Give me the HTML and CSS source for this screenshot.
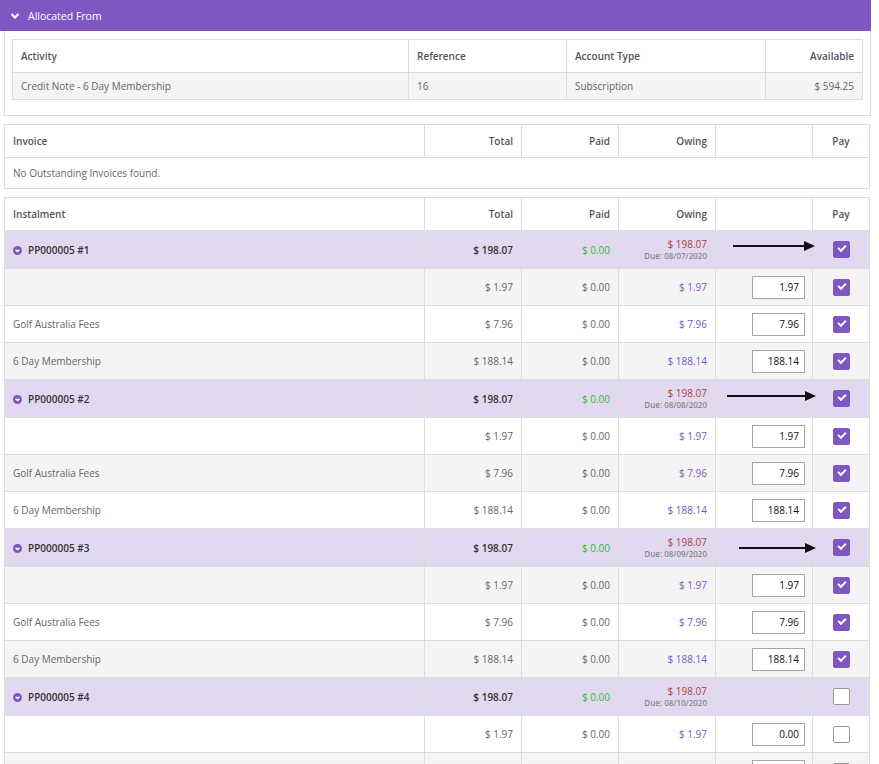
FILE: index.html
```html
<!DOCTYPE html>
<html>
<head>
<meta charset="utf-8">
<link rel="stylesheet" href="styles.css">
</head>
<body>
<div class="wrap">
  <div class="bar">
    <svg class="bar-chev" width="10" height="8" viewBox="0 0 10 8"><path d="M1.5 2 L5 5.5 L8.5 2" fill="none" stroke="#fff" stroke-width="2.2"/></svg>
    <span>Allocated From</span>
  </div>
  <div class="panel">
    <table class="tbl alloc">
      <colgroup><col style="width:396px"><col style="width:158px"><col style="width:199px"><col></colgroup>
      <tr class="head"><td>Activity</td><td>Reference</td><td>Account Type</td><td class="r">Available</td></tr>
      <tr class="gray"><td>Credit Note - 6 Day Membership</td><td>16</td><td>Subscription</td><td class="r">$ 594.25</td></tr>
    </table>
  </div>

  <table class="tbl main inv">
    <colgroup><col style="width:420px"><col style="width:97px"><col style="width:97px"><col style="width:97px"><col style="width:97px"><col></colgroup>
    <tr class="head"><td>Invoice</td><td class="r">Total</td><td class="r">Paid</td><td class="r">Owing</td><td></td><td class="c">Pay</td></tr>
    <tr class="plain"><td colspan="6">No Outstanding Invoices found.</td></tr>
  </table>

  <table class="tbl main inst">
    <colgroup><col style="width:420px"><col style="width:97px"><col style="width:97px"><col style="width:97px"><col style="width:97px"><col></colgroup>
    <tr class="head"><td>Instalment</td><td class="r">Total</td><td class="r">Paid</td><td class="r">Owing</td><td></td><td class="c">Pay</td></tr>

    <tr class="pp"><td><span class="circ"><svg width="9" height="9" viewBox="0 0 9 9"><circle cx="4.5" cy="4.5" r="4.5" fill="#7e57c2"/><path d="M2.6 3.7 L4.5 5.5 L6.4 3.7" fill="none" stroke="#fff" stroke-width="1.4"/></svg></span>PP000005 #1</td><td class="r">$ 198.07</td><td class="r green">$ 0.00</td><td class="r"><div class="red">$ 198.07</div><div class="due">Due: 08/07/2020</div></td><td class="arr-cell"><span class="arrow a1"></span></td><td class="c"><span class="cb on"></span></td></tr>
    <tr class="gray"><td></td><td class="r">$ 1.97</td><td class="r">$ 0.00</td><td class="r purple">$ 1.97</td><td class="r"><span class="inp">1.97</span></td><td class="c"><span class="cb on"></span></td></tr>
    <tr class="white"><td>Golf Australia Fees</td><td class="r">$ 7.96</td><td class="r">$ 0.00</td><td class="r purple">$ 7.96</td><td class="r"><span class="inp">7.96</span></td><td class="c"><span class="cb on"></span></td></tr>
    <tr class="gray"><td>6 Day Membership</td><td class="r">$ 188.14</td><td class="r">$ 0.00</td><td class="r purple">$ 188.14</td><td class="r"><span class="inp">188.14</span></td><td class="c"><span class="cb on"></span></td></tr>

    <tr class="pp"><td><span class="circ"><svg width="9" height="9" viewBox="0 0 9 9"><circle cx="4.5" cy="4.5" r="4.5" fill="#7e57c2"/><path d="M2.6 3.7 L4.5 5.5 L6.4 3.7" fill="none" stroke="#fff" stroke-width="1.4"/></svg></span>PP000005 #2</td><td class="r">$ 198.07</td><td class="r green">$ 0.00</td><td class="r"><div class="red">$ 198.07</div><div class="due">Due: 08/08/2020</div></td><td class="arr-cell"><span class="arrow a2"></span></td><td class="c"><span class="cb on"></span></td></tr>
    <tr class="white"><td></td><td class="r">$ 1.97</td><td class="r">$ 0.00</td><td class="r purple">$ 1.97</td><td class="r"><span class="inp">1.97</span></td><td class="c"><span class="cb on"></span></td></tr>
    <tr class="gray"><td>Golf Australia Fees</td><td class="r">$ 7.96</td><td class="r">$ 0.00</td><td class="r purple">$ 7.96</td><td class="r"><span class="inp">7.96</span></td><td class="c"><span class="cb on"></span></td></tr>
    <tr class="white"><td>6 Day Membership</td><td class="r">$ 188.14</td><td class="r">$ 0.00</td><td class="r purple">$ 188.14</td><td class="r"><span class="inp">188.14</span></td><td class="c"><span class="cb on"></span></td></tr>

    <tr class="pp"><td><span class="circ"><svg width="9" height="9" viewBox="0 0 9 9"><circle cx="4.5" cy="4.5" r="4.5" fill="#7e57c2"/><path d="M2.6 3.7 L4.5 5.5 L6.4 3.7" fill="none" stroke="#fff" stroke-width="1.4"/></svg></span>PP000005 #3</td><td class="r">$ 198.07</td><td class="r green">$ 0.00</td><td class="r"><div class="red">$ 198.07</div><div class="due">Due: 08/09/2020</div></td><td class="arr-cell"><span class="arrow a3"></span></td><td class="c"><span class="cb on"></span></td></tr>
    <tr class="gray"><td></td><td class="r">$ 1.97</td><td class="r">$ 0.00</td><td class="r purple">$ 1.97</td><td class="r"><span class="inp">1.97</span></td><td class="c"><span class="cb on"></span></td></tr>
    <tr class="white"><td>Golf Australia Fees</td><td class="r">$ 7.96</td><td class="r">$ 0.00</td><td class="r purple">$ 7.96</td><td class="r"><span class="inp">7.96</span></td><td class="c"><span class="cb on"></span></td></tr>
    <tr class="gray"><td>6 Day Membership</td><td class="r">$ 188.14</td><td class="r">$ 0.00</td><td class="r purple">$ 188.14</td><td class="r"><span class="inp">188.14</span></td><td class="c"><span class="cb on"></span></td></tr>

    <tr class="pp"><td><span class="circ"><svg width="9" height="9" viewBox="0 0 9 9"><circle cx="4.5" cy="4.5" r="4.5" fill="#7e57c2"/><path d="M2.6 3.7 L4.5 5.5 L6.4 3.7" fill="none" stroke="#fff" stroke-width="1.4"/></svg></span>PP000005 #4</td><td class="r">$ 198.07</td><td class="r green">$ 0.00</td><td class="r"><div class="red">$ 198.07</div><div class="due">Due: 08/10/2020</div></td><td></td><td class="c"><span class="cb"></span></td></tr>
    <tr class="white"><td></td><td class="r">$ 1.97</td><td class="r">$ 0.00</td><td class="r purple">$ 1.97</td><td class="r"><span class="inp">0.00</span></td><td class="c"><span class="cb"></span></td></tr>
    <tr class="gray"><td></td><td></td><td></td><td></td><td class="r"><span class="inp"></span></td><td class="c"><span class="cb"></span></td></tr>
  </table>
</div>
</body>
</html>
```
FILE: styles.css
```css
html, body { margin: 0; padding: 0; background: #fff; }
body { font-family: "Open Sans", "Liberation Sans", sans-serif; font-size: 10px; color: #666; }
.wrap { width: 871px; }
.bar { height: 31px; background: #7e57c2; color: #fff; display: flex; align-items: center; font-size: 10.5px; padding-left: 10px; box-sizing: border-box; }
.bar-chev { margin-right: 8px; }
.panel { margin-left: 4px; border: 1px solid #ddd; border-top: 0; padding: 8px 7px 15px 7px; }
.tbl { border-collapse: collapse; table-layout: fixed; width: 100%; }
.tbl td { border: 1px solid #dcdcdc; padding: 0 8px; white-space: nowrap; vertical-align: middle; }
.alloc { width: 851px; border: 1px solid #d0d0d0; }
.alloc .head td { height: 32px; }
.alloc tr.gray td { height: 26px; }
.main { margin-left: 4px; width: 866px; border: 1px solid #d0d0d0; }
.inv { margin-top: 8px; }
.inst { margin-top: 8px; }
.head td { height: 32px; color: #555; font-weight: 600; }
.plain td { height: 30px; background: #fff; }
.gray td { background: #f4f4f4; height: 36px; }
.white td { background: #fff; height: 36px; }
.pp td { background: #e2d9f0; height: 37px; color: #333; font-weight: 600; }
.r { text-align: right; }
.c { text-align: center; }
.green { color: #33bb33 !important; font-weight: 400 !important; }
.red { color: #a94442; font-weight: 400; font-size: 10px; line-height: 13px; }
.due { color: #888; font-size: 8px; line-height: 10px; }
.purple { color: #7e57c2; }
.circ { display: inline-block; width: 9px; height: 9px; margin-right: 6px; vertical-align: -1px; }
.circ svg { display: block; }
.inp { display: inline-block; width: 53px; height: 23px; box-sizing: border-box; border: 1px solid #a5a5a5; background: #fff; color: #111; text-align: right; padding-right: 5px; line-height: 21px; vertical-align: middle; margin-right: -1px; }
.cb { display: inline-block; width: 17px; height: 17px; box-sizing: border-box; border: 1px solid #999; border-radius: 2px; background: #fff; vertical-align: middle; position: relative; }
.cb.on { background: #7e57c2; border-color: #7e57c2; }
.cb.on::after { content: ""; position: absolute; left: 4px; top: 3px; width: 6px; height: 3px; border-left: 2.5px solid #fff; border-bottom: 2.5px solid #fff; transform: rotate(-45deg); }
.arr-cell { position: relative; }
.arrow { position: absolute; height: 2px; background: #111; }
.arrow::after { content: ""; position: absolute; right: -11px; top: -4px; border-left: 11px solid #111; border-top: 5px solid transparent; border-bottom: 5px solid transparent; }
.a1 { left: 17px; width: 71px; top: 14px; }
.a2 { left: 11px; width: 78px; top: 15px; }
.a3 { left: 23px; width: 66px; top: 18px; }
```
